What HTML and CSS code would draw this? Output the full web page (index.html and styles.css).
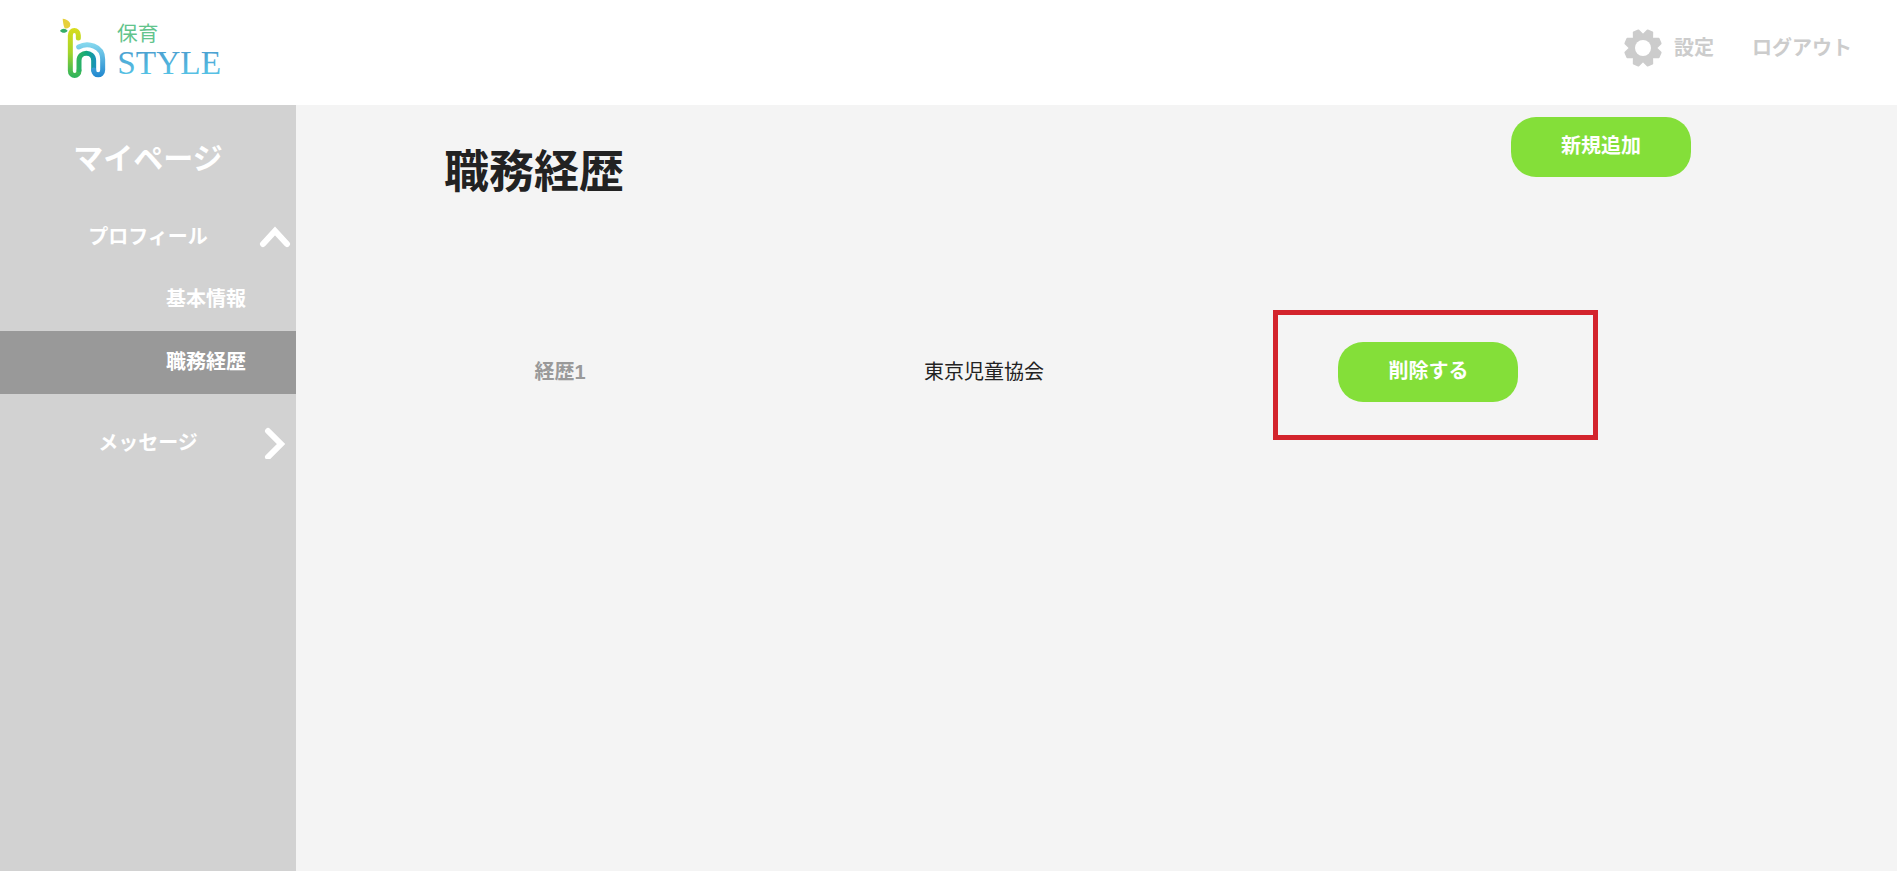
FILE: index.html
```html
<!DOCTYPE html>
<html lang="ja">
<head>
    <meta charset="UTF-8">
    <meta name="viewport" content="width=device-width, initial-scale=1.0">
    <title>職務経歴 | 保育STYLE</title>
    <link rel="stylesheet" href="styles.css">
</head>
<body>
    <header class="header">
        <a href="#" class="logo" aria-label="保育STYLE">
            <svg width="180" height="64" viewBox="48 48 540 192">
                <defs>
                    <linearGradient id="stem" gradientUnits="userSpaceOnUse" x1="0" y1="85" x2="0" y2="230">
                        <stop offset="0" stop-color="#d8dc1c"/>
                        <stop offset="0.5" stop-color="#a5d52a"/>
                        <stop offset="1" stop-color="#2fb45c"/>
                    </linearGradient>
                    <linearGradient id="inner" gradientUnits="userSpaceOnUse" x1="110" y1="0" x2="170" y2="0">
                        <stop offset="0" stop-color="#35b55a"/>
                        <stop offset="0.5" stop-color="#12a87c"/>
                        <stop offset="1" stop-color="#1b8fc4"/>
                    </linearGradient>
                    <linearGradient id="outer" gradientUnits="userSpaceOnUse" x1="0" y1="130" x2="0" y2="230">
                        <stop offset="0" stop-color="#86d8ee"/>
                        <stop offset="1" stop-color="#2188cf"/>
                    </linearGradient>
                    <linearGradient id="word" gradientUnits="userSpaceOnUse" x1="0" y1="150" x2="0" y2="222">
                        <stop offset="0" stop-color="#4b9fd0"/>
                        <stop offset="1" stop-color="#56c1e4"/>
                    </linearGradient>
                </defs>
                <path d="M68 56c14 2 24 10 23 19-1 8-9 12-17 10-4-9-5-19-6-29z" fill="#e6d03c"/>
                <path d="M60 92c6-8 17-8 23 0-6 8-17 8-23 0z" fill="#35ae68"/>
                <g fill="none" stroke-width="15" stroke-linecap="round">
                    <path d="M115 114V106c0-19-24-19-24 0v106c0 19 26 19 26 0" stroke="url(#stem)"/>
                    <path d="M117 210v-28c0-30 44-30 44 0v28" stroke="url(#inner)"/>
                    <path d="M161 210c0 19 27 19 27 0v-32c0-42-46-51-72-37" stroke="url(#outer)"/>
                </g>
                <text x="231" y="122" class="logo-kanji">保育</text>
                <text x="232" y="222" class="logo-word" fill="url(#word)">STYLE</text>
            </svg>
        </a>
        <nav class="header-nav">
            <a href="#">
                <svg class="gear" width="38" height="38" viewBox="-19 -19 38 38" fill="#ccc">
                    <g stroke="#ccc" stroke-width="2" stroke-linejoin="round">
                        <path id="teeth" d="M-4.500-13L-2.500-18H2.500L4.500-13zM-4.500 13L-2.500 18H2.500L4.500 13zM-13-4.500L-18-2.500V2.500L-13 4.500zM13-4.500L18-2.500V2.500L13 4.500z" transform="rotate(22.500)"/>
                        <use href="#teeth" transform="rotate(45)"/>
                    </g>
                    <circle r="14"/>
                    <circle r="8" fill="#fff"/>
                </svg>
                設定
            </a>
            <a href="#">ログアウト</a>
        </nav>
    </header>

    <div class="wrapper">
        <aside class="sidebar">
            <h2>マイページ</h2>
            <ul class="menu">
                <li>
                    <a href="#" class="menu-item">プロフィール
                        <svg class="arrow" width="32" height="32" viewBox="0 0 32 32"><path d="M4 23L16 10L28 23"/></svg>
                    </a>
                    <ul class="submenu">
                        <li><a href="#">基本情報</a></li>
                        <li><a href="#" class="active">職務経歴</a></li>
                    </ul>
                </li>
                <li>
                    <a href="#" class="menu-item">メッセージ
                        <svg class="arrow" width="32" height="32" viewBox="0 0 32 32"><path d="M9 4L22 17L9 30"/></svg>
                    </a>
                </li>
            </ul>
        </aside>

        <main class="content">
            <div class="title-row">
                <h1>職務経歴</h1>
                <button type="button" class="btn">新規追加</button>
            </div>
            <table class="career">
                <tr>
                    <th scope="row">経歴1</th>
                    <td class="company">東京児童協会</td>
                    <td>
                        <div class="action">
                            <button type="button" class="btn">削除する</button>
                            <span class="highlight"></span>
                        </div>
                    </td>
                </tr>
            </table>
        </main>
    </div>
</body>
</html>
```
FILE: styles.css
```css
* {
    box-sizing: border-box;
}
body {
    margin: 0;
    min-height: 100vh;
    display: flex;
    flex-direction: column;
    font-family: "Liberation Sans", "Noto Sans CJK JP", sans-serif;
    font-size: 20px;
    line-height: 30px;
    color: #222;
    background-color: #f4f4f4;
}
a {
    color: inherit;
    text-decoration: none;
}
ul {
    margin: 0;
    padding: 0;
    list-style: none;
}

/* header */
.header {
    display: flex;
    justify-content: space-between;
    align-items: flex-start;
    height: 105px;
    padding: 16px 45px 0 56px;
    background-color: #fff;
}
.logo svg {
    display: block;
}
.logo-kanji {
    font-family: "Noto Sans CJK JP", sans-serif;
    font-size: 62px;
    fill: #62c48c;
}
.logo-word {
    font-family: "Liberation Serif", serif;
    font-size: 100px;
}
.header-nav {
    display: flex;
    gap: 38px;
    padding-top: 12px;
    font-weight: bold;
    color: #ccc;
}
.header-nav a {
    display: flex;
    align-items: center;
    gap: 12px;
    height: 40px;
}

/* sidebar */
.wrapper {
    display: flex;
    flex: 1;
}
.sidebar {
    flex: none;
    width: 296px;
    padding-top: 32px;
    background-color: #d2d2d2;
    color: #fff;
    font-weight: bold;
    text-align: center;
}
.sidebar h2 {
    margin: 0 0 33px;
    font-size: 30px;
    line-height: 44px;
}
.menu-item {
    display: block;
    position: relative;
    padding: 8px 0;
}
.arrow {
    position: absolute;
    top: 7px;
    right: 5px;
    fill: none;
    stroke: #fff;
    stroke-width: 6;
    stroke-linecap: round;
}
.submenu {
    margin: 8px 0 26px;
    text-align: right;
}
.submenu a {
    display: block;
    padding: 16px 50px;
    line-height: 31px;
}
.submenu .active {
    background-color: #999;
}

/* main */
.content {
    flex: 1;
    padding-top: 12px;
}
.title-row {
    display: flex;
    justify-content: space-between;
    align-items: flex-start;
    margin: 0 206px 0 148px;
}
.title-row h1 {
    margin: 22px 0 0;
    font-size: 45px;
    line-height: 68px;
}
.btn {
    width: 180px;
    height: 60px;
    padding: 0 0 6px;
    border: none;
    border-radius: 25px;
    background-color: #84df39;
    color: #fff;
    font-family: inherit;
    font-size: 20px;
    font-weight: bold;
    cursor: pointer;
}
.career {
    width: 82%;
    margin: 103px 0 0 52px;
    border-collapse: collapse;
    table-layout: fixed;
    text-align: center;
}
.career th,
.career td {
    padding: 32px 0;
}
.career th,
.career .company {
    width: 424px;
}
.career th {
    color: #999;
}
.action {
    position: relative;
    width: 180px;
    margin: 0 auto;
}
.highlight {
    position: absolute;
    top: -32px;
    left: -65px;
    width: 325px;
    height: 130px;
    border: 5px solid #d3242c;
    pointer-events: none;
}
```
